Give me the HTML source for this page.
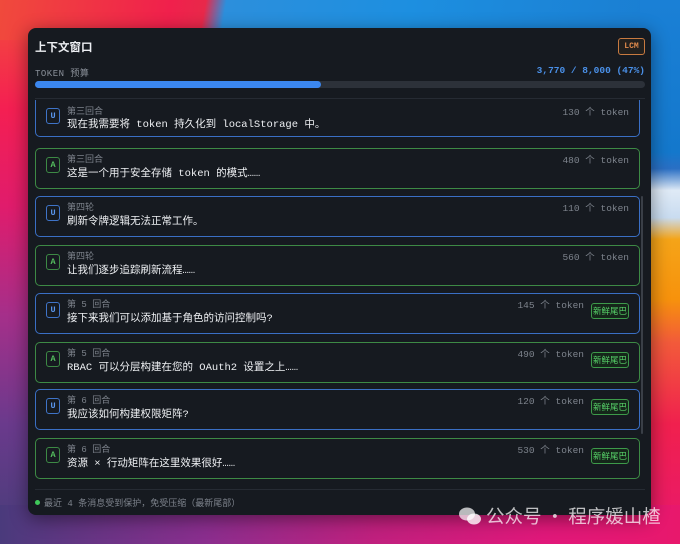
<!DOCTYPE html>
<html><head><meta charset="utf-8"><style>
*{margin:0;padding:0;box-sizing:border-box}
body{width:680px;height:544px;overflow:hidden;position:relative;font-family:"Liberation Mono","Noto Sans CJK SC",monospace;background:#c02070}
.lt{position:absolute;left:0;top:0;width:40px;height:544px;background:linear-gradient(180deg,#f2503a 0%,#f41f52 20%,#e01c6c 38%,#a52f8a 58%,#6a3a8c 78%,#463d78 100%)}
.tp{position:absolute;left:0;top:0;width:680px;height:40px;background:linear-gradient(100deg,#f04a3c 0%,#f0204c 25%,#e8284a 30%,#2c8fdc 33%,#1d8fe0 60%,#1a7cd0 100%)}
.rt{position:absolute;left:640px;top:0;width:40px;height:544px;background:linear-gradient(180deg,#1a80d6 0%,#1478cc 28%,#2a6fc4 31%,#dfeaf6 35%,#c9dcf0 40%,#f5a418 44%,#f7920c 55%,#f25a3a 63%,#f0204e 78%,#e8186e 100%)}
.bt{position:absolute;left:0;top:505px;width:680px;height:39px;background:linear-gradient(90deg,#4a3a7c 0%,#8a2e8e 30%,#c0207e 55%,#e0187a 80%,#e8186c 100%)}
.panel{position:absolute;left:28px;top:28px;width:623px;height:487px;background:#161a20;border-radius:8px;box-shadow:0 4px 18px rgba(0,0,0,.45);overflow:hidden}
.title{position:absolute;left:7px;top:11px;font:bold 11.5px "Liberation Sans","Noto Sans CJK SC",sans-serif;color:#eceef2}
.lcm{position:absolute;left:590px;top:10px;width:27px;height:17px;border:1px solid #c87a40;border-radius:3px;color:#e08a4c;font-size:8px;font-weight:bold;text-align:center;line-height:15px;background:#22201e}
.tk{position:absolute;left:7px;top:38px;font-size:9px;color:#8a9099;letter-spacing:.5px}
.tv{position:absolute;right:6px;top:37px;font-size:9.5px;color:#4a90e8;font-weight:bold}
.bar{position:absolute;left:7px;top:53px;width:610px;height:7px;border-radius:4px;background:#2c3139}
.bar i{display:block;width:286px;height:7px;border-radius:4px;background:#3b87ef}
.div{position:absolute;left:7px;top:70px;width:610px;height:1px;background:#262b33}
.list{position:absolute;left:0;top:72px;width:623px;height:388px;overflow:hidden}
.card{position:absolute;left:7px;width:605px;height:41px;border:1.3px solid #3a6fc4;border-radius:5px;background:#161a20}
.card.a{border-color:#3d8a45}
.b{position:absolute;left:10px;top:8px;width:14px;height:16px;border:1.2px solid #3f74c8;border-radius:3px;color:#5a97ee;font-size:8.5px;font-weight:bold;text-align:center;line-height:14px}
.a .b{border-color:#3d8a45;color:#55c05f}
.t{position:absolute;left:31px;top:3px;font-size:9px;color:#7d838c}
.m{position:absolute;left:31px;top:16px;font-size:10.5px;color:#eef0f3;white-space:nowrap}
.n{position:absolute;right:10px;top:3px;font-size:9.5px;color:#7d838c}
.n.s{right:55px}
.tag{position:absolute;right:10px;top:9px;width:38px;height:16px;border:1.2px solid #3d9a4a;border-radius:3px;background:#15261a;color:#58d46a;font-size:8.5px;text-align:center;line-height:14px;font-family:"Noto Sans CJK SC",sans-serif}
.sb{position:absolute;left:613px;top:168px;width:2px;height:238px;background:#3a3f47;border-radius:1px}
.div2{position:absolute;left:7px;top:461px;width:610px;height:1px;background:#262b33}
.foot{position:absolute;left:7px;top:468px;font-size:9px;color:#7d838c}
.foot b{display:inline-block;width:5px;height:5px;border-radius:50%;background:#3fc95a;margin-right:4px;vertical-align:1px}
.wm{position:absolute;left:458px;top:503px;font:18.5px "Noto Sans CJK SC",sans-serif;color:rgba(255,255,255,.72);white-space:nowrap}
</style></head><body>
<div class="lt"></div><div class="tp"></div><div class="rt"></div><div class="bt"></div>
<div class="panel">
<div class="title">上下文窗口</div>
<div class="lcm">LCM</div>
<div class="tk">TOKEN 预算</div>
<div class="tv">3,770 / 8,000 (47%)</div>
<div class="bar"><i></i></div>
<div class="div"></div>
<div class="list">
<div class="card" style="top:-4px"><div class="b" style="top:11px">U</div><div class="t" style="top:7px">第三回合</div><div class="m" style="top:19px">现在我需要将 token 持久化到 localStorage 中。</div><div class="n" style="top:7px">130 个 token</div></div>
<div class="card a" style="top:48px"><div class="b">A</div><div class="t">第三回合</div><div class="m">这是一个用于安全存储 token 的模式……</div><div class="n">480 个 token</div></div>
<div class="card" style="top:96px"><div class="b">U</div><div class="t">第四轮</div><div class="m">刷新令牌逻辑无法正常工作。</div><div class="n">110 个 token</div></div>
<div class="card a" style="top:145px"><div class="b">A</div><div class="t">第四轮</div><div class="m">让我们逐步追踪刷新流程……</div><div class="n">560 个 token</div></div>
<div class="card" style="top:193px"><div class="b">U</div><div class="t">第 5 回合</div><div class="m">接下来我们可以添加基于角色的访问控制吗?</div><div class="n s">145 个 token</div><div class="tag">新鲜尾巴</div></div>
<div class="card a" style="top:242px"><div class="b">A</div><div class="t">第 5 回合</div><div class="m">RBAC 可以分层构建在您的 OAuth2 设置之上……</div><div class="n s">490 个 token</div><div class="tag">新鲜尾巴</div></div>
<div class="card" style="top:289px"><div class="b">U</div><div class="t">第 6 回合</div><div class="m">我应该如何构建权限矩阵?</div><div class="n s">120 个 token</div><div class="tag">新鲜尾巴</div></div>
<div class="card a" style="top:338px"><div class="b">A</div><div class="t">第 6 回合</div><div class="m">资源 × 行动矩阵在这里效果很好……</div><div class="n s">530 个 token</div><div class="tag">新鲜尾巴</div></div>
</div>
<div class="sb"></div>
<div class="div2"></div>
<div class="foot"><b></b>最近 4 条消息受到保护，免受压缩（最新尾部）</div>
</div>
<div class="wm"><svg width="24" height="20" viewBox="0 0 24 20" style="vertical-align:-3px;margin-right:4px"><ellipse cx="9" cy="8" rx="8" ry="6.5" fill="rgba(255,255,255,.7)"/><ellipse cx="16" cy="13" rx="7" ry="5.5" fill="rgba(255,255,255,.8)"/></svg>公众号 · 程序媛山楂</div>
</body></html>
